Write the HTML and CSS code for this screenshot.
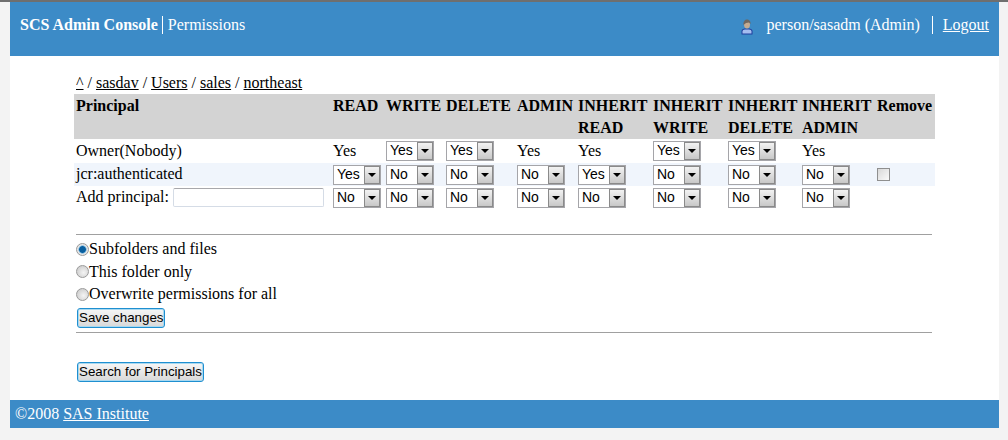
FILE: index.html
```html
<!DOCTYPE html>
<html lang="en">
<head>
    <meta charset="UTF-8" />
    <title>SCS Admin Console - Permissions</title>
    <link rel="stylesheet" href="styles.css">
</head>
<body>
    <div class="page">
        <div class="header">
            <div class="header-left">
                <span class="app-name">SCS Admin Console</span>
                <span class="section-name">Permissions</span>
            </div>
            <div class="header-right">
                <svg class="user-icon" width="12" height="16" viewBox="0 0 12 16">
                    <path d="M.5 15.500v-3c0-2 1-2.500 3-3h5c2 .5 3 1 3 3v3z" fill="#1f3f9e" />
                    <path d="M1.500 14.500v-2c0-1.200 1-2 2.500-2h4c1.500 0 2.500.8 2.500 2v2z" fill="#a4bdf0" />
                    <ellipse cx="6" cy="5.500" rx="3" ry="4" fill="#c4ab92" />
                    <path d="M2.500 6c-.5-3.500 1.500-5.500 3.500-5.500s4 2 3.500 4.500L8 3.500 5 4z" fill="#6e6761" />
                </svg>
                <span class="user-name">person/sasadm (Admin)</span>
                <a class="logout" href="#">Logout</a>
            </div>
        </div>

        <div class="content">
            <div class="breadcrumb">
                <a href="#">^</a> / <a href="#">sasdav</a> / <a href="#">Users</a> / <a href="#">sales</a> / <a href="#">northeast</a>
            </div>

            <table class="perm-table">
                <colgroup>
                    <col class="col-principal">
                    <col class="col-read">
                    <col class="col-write">
                    <col class="col-delete">
                    <col class="col-admin">
                    <col class="col-inherit">
                    <col class="col-inherit">
                    <col class="col-inherit-d">
                    <col class="col-inherit">
                    <col class="col-remove">
                </colgroup>
                <thead>
                    <tr>
                        <th>Principal</th>
                        <th>READ</th>
                        <th>WRITE</th>
                        <th>DELETE</th>
                        <th>ADMIN</th>
                        <th>INHERIT READ</th>
                        <th>INHERIT WRITE</th>
                        <th>INHERIT DELETE</th>
                        <th>INHERIT ADMIN</th>
                        <th>Remove</th>
                    </tr>
                </thead>
                <tbody>
                    <tr class="row-owner">
                        <td>Owner(Nobody)</td>
                        <td>Yes</td>
                        <td><span class="select-box"><select><option selected>Yes</option><option>No</option></select></span></td>
                        <td><span class="select-box"><select><option selected>Yes</option><option>No</option></select></span></td>
                        <td>Yes</td>
                        <td>Yes</td>
                        <td><span class="select-box"><select><option selected>Yes</option><option>No</option></select></span></td>
                        <td><span class="select-box"><select><option selected>Yes</option><option>No</option></select></span></td>
                        <td>Yes</td>
                        <td></td>
                    </tr>
                    <tr class="row-alt">
                        <td>jcr:authenticated</td>
                        <td><span class="select-box"><select><option selected>Yes</option><option>No</option></select></span></td>
                        <td><span class="select-box"><select><option>Yes</option><option selected>No</option></select></span></td>
                        <td><span class="select-box"><select><option>Yes</option><option selected>No</option></select></span></td>
                        <td><span class="select-box"><select><option>Yes</option><option selected>No</option></select></span></td>
                        <td><span class="select-box"><select><option selected>Yes</option><option>No</option></select></span></td>
                        <td><span class="select-box"><select><option>Yes</option><option selected>No</option></select></span></td>
                        <td><span class="select-box"><select><option>Yes</option><option selected>No</option></select></span></td>
                        <td><span class="select-box"><select><option>Yes</option><option selected>No</option></select></span></td>
                        <td><input class="check" type="checkbox"></td>
                    </tr>
                    <tr>
                        <td>Add principal: <input class="principal-input" type="text"></td>
                        <td><span class="select-box"><select><option>Yes</option><option selected>No</option></select></span></td>
                        <td><span class="select-box"><select><option>Yes</option><option selected>No</option></select></span></td>
                        <td><span class="select-box"><select><option>Yes</option><option selected>No</option></select></span></td>
                        <td><span class="select-box"><select><option>Yes</option><option selected>No</option></select></span></td>
                        <td><span class="select-box"><select><option>Yes</option><option selected>No</option></select></span></td>
                        <td><span class="select-box"><select><option>Yes</option><option selected>No</option></select></span></td>
                        <td><span class="select-box"><select><option>Yes</option><option selected>No</option></select></span></td>
                        <td><span class="select-box"><select><option>Yes</option><option selected>No</option></select></span></td>
                        <td></td>
                    </tr>
                </tbody>
            </table>

            <div class="apply-box">
                <label class="radio-row"><input type="radio" name="scope" checked>Subfolders and files</label>
                <label class="radio-row"><input type="radio" name="scope">This folder only</label>
                <label class="radio-row"><input type="radio" name="scope">Overwrite permissions for all</label>
                <button class="btn save-btn" type="button">Save changes</button>
            </div>

            <button class="btn search-btn" type="button">Search for Principals</button>
        </div>

        <div class="footer">
            ©2008 <a href="#">SAS Institute</a>
        </div>
    </div>
</body>
</html>
```

FILE: styles.css
```css
html {
    background-color: #f3f3f3;
}
body {
    font-family: 'Liberation Serif', 'Times New Roman', serif;
    font-size: 16px;
    color: #000;
    margin: 0;
    border-top: 2px solid #6f6f6f;
}
a {
    color: inherit;
}
.page {
    margin: 0 9px 0 10px;
    background: #fff;
}
.header {
    background-color: #3c8bc7;
    color: #fff;
    height: 54px;
    display: flex;
    justify-content: space-between;
    align-items: center;
    padding: 0 10px 8px 10px;
    box-sizing: border-box;
}
.header-left,
.header-right {
    display: flex;
    align-items: center;
}
.app-name {
    font-weight: bold;
    padding-right: 4px;
    border-right: 1px solid #fff;
    line-height: 18px;
}
.section-name {
    padding-left: 5px;
    line-height: 18px;
}
.user-icon {
    margin: 4px 13px 0 0;
}
.user-name {
    padding-right: 12px;
    border-right: 1px solid #fff;
    line-height: 18px;
}
.logout {
    margin-left: 10px;
}
.content {
    padding: 17px 63px 18px 64px;
}
.breadcrumb {
    padding-left: 2px;
    line-height: 19px;
    height: 21px;
}
.perm-table {
    width: 861px;
    table-layout: fixed;
    border-collapse: collapse;
}
.col-principal { width: 257px; }
.col-read { width: 53px; }
.col-write { width: 60px; }
.col-delete { width: 71px; }
.col-admin { width: 61px; }
.col-inherit { width: 75px; }
.col-inherit-d { width: 74px; }
.col-remove { width: 60px; }
.perm-table th {
    background-color: #d3d3d3;
    text-align: left;
    vertical-align: top;
    line-height: 22px;
    padding: 1px 0 0 2px;
    height: 45px;
    box-sizing: border-box;
}
.perm-table td {
    padding: 0 0 0 2px;
    height: 23px;
    white-space: nowrap;
}
.row-owner td {
    height: 24px;
}
.row-alt td {
    background-color: #f0f5fc;
}
.row-alt td:first-child {
    height: 21px;
    padding-bottom: 2px;
}
.select-box {
    display: inline-block;
    position: relative;
    height: 20px;
    vertical-align: middle;
}
.select-box select {
    appearance: none;
    display: block;
    width: 48px;
    height: 20px;
    margin: 0;
    padding: 0 0 2px 3px;
    border: 1px solid #a5a5a9;
    border-radius: 0;
    background: #fff;
    color: #000;
    font-family: 'Liberation Sans', Arial, sans-serif;
    font-size: 14px;
}
/* the dropdown arrow sits over the right end of the select */
.select-box::after {
    content: "";
    position: absolute;
    top: 1px;
    right: 1px;
    width: 16px;
    height: 18px;
    box-sizing: border-box;
    border: 1px solid #8a8a8a;
    background: linear-gradient(#f2f2f2, #c8c8c8);
    pointer-events: none;
}
.select-box::before {
    content: "";
    position: absolute;
    z-index: 1;
    top: 8px;
    right: 5px;
    border-left: 4px solid transparent;
    border-right: 4px solid transparent;
    border-top: 4px solid #000;
    pointer-events: none;
}
.principal-input {
    width: 151px;
    height: 19px;
    box-sizing: border-box;
    margin: 0;
    padding: 0 2px;
    border: 1px solid #d5dce6;
    border-top-color: #a8a8ac;
    border-radius: 2px;
    vertical-align: middle;
}
.check {
    appearance: none;
    display: block;
    width: 13px;
    height: 13px;
    margin: 0;
    border: 1px solid #8f8f8f;
    background: linear-gradient(135deg, #d8d8d8, #fafafa);
}
.apply-box {
    margin: 25px 4px 0 2px;
    padding-top: 3px;
    height: 99px;
    box-sizing: border-box;
    border-top: 1px solid #a0a0a0;
    border-bottom: 1px solid #a0a0a0;
    display: flex;
    flex-direction: column;
    align-items: flex-start;
}
.radio-row {
    display: flex;
    align-items: center;
    height: 22.500px;
}
.radio-row input {
    appearance: none;
    width: 13px;
    height: 13px;
    margin: 0;
    border: 1px solid #9a9a9a;
    border-radius: 50%;
    background: radial-gradient(circle at 60% 60%, #f4f4f4, #c4c4c4);
}
.radio-row input:checked {
    background: radial-gradient(circle, #0a5f9e 0 3px, #5aa6d8 3.500px, #e6e6e6 4.500px);
}
.btn {
    display: block;
    height: 20px;
    padding: 0 1px;
    margin-left: 1px;
    border: 1px solid #1f8fd0;
    border-radius: 3px;
    box-shadow: inset 0 0 0 1px #a8d8f0;
    background: linear-gradient(#f6f6f6, #d8d8d8);
    color: #000;
    font-family: 'Liberation Sans', Arial, sans-serif;
    font-size: 13.33px;
    line-height: 16px;
}
.save-btn {
    margin-top: 2px;
}
.search-btn {
    margin: 29px 0 0 3px;
}
.footer {
    background-color: #3c8bc7;
    color: #fff;
    height: 28px;
    line-height: 27px;
    padding-left: 5px;
}
```
